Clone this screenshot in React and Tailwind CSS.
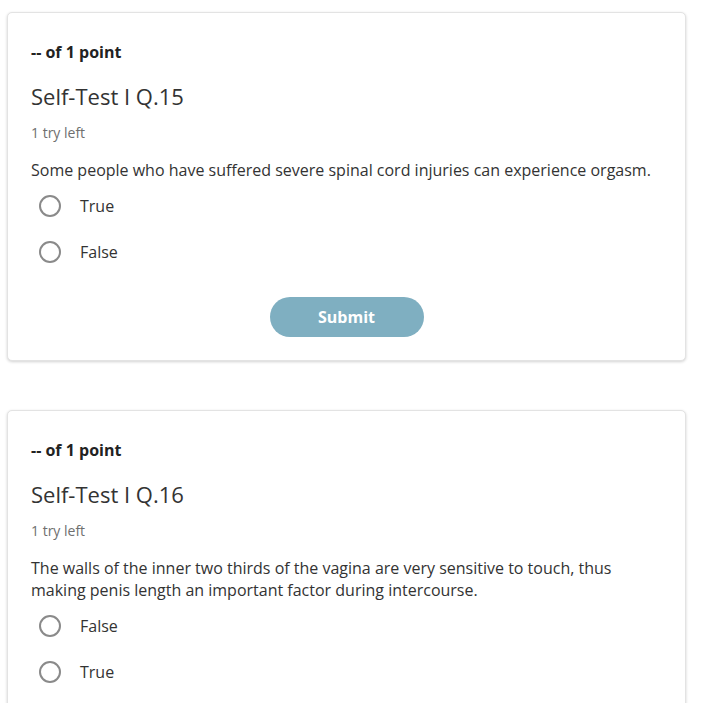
const questions = [
  {
    title: 'Self-Test I Q.15',
    text: 'Some people who have suffered severe spinal cord injuries can experience orgasm.',
    options: ['True', 'False'],
  },
  {
    title: 'Self-Test I Q.16',
    text: 'The walls of the inner two thirds of the vagina are very sensitive to touch, thus making penis length an important factor during intercourse.',
    options: ['False', 'True'],
  },
];

function Radio({ label }) {
  return (
    <label className="flex items-center h-[36px] pl-[8px] cursor-pointer">
      <span className="w-[22px] h-[22px] rounded-full border-2 border-[#8a8a8a] bg-white shrink-0" />
      <span className="ml-[19px] text-[16px] text-[#333]">{label}</span>
    </label>
  );
}

function QuestionCard({ q }) {
  return (
    <div className="bg-white border border-[#e3e3e3] rounded-[5px] shadow-[0_1px_3px_rgba(0,0,0,0.18)] pt-[29px] pb-[23px] px-[23px]">
      <div className="text-[16px] font-bold text-[#222] leading-[20px]">-- of 1 point</div>
      <h2 className="mt-[19px] text-[22px] text-[#333] leading-[30px]">{q.title}</h2>
      <div className="mt-[13px] text-[14px] text-[#6f6f6f] leading-[18px]">1 try left</div>
      <p className="mt-[17px] text-[16px] text-[#333] leading-[22px]">{q.text}</p>
      <div className="mt-[7px] flex flex-col gap-[10px]">
        {q.options.map((o) => (
          <Radio key={o} label={o} />
        ))}
      </div>
      {q.title.endsWith('15') && (
        <div className="flex justify-center mt-[27px]">
          <button className="w-[154px] h-[40px] rounded-full bg-[#7fafc1] text-white font-bold text-[16px]">
            Submit
          </button>
        </div>
      )}
    </div>
  );
}

export default function App() {
  return (
    <div className="bg-white min-h-[703px] pt-[12px] pl-[7px] pr-[34px] font-['Open_Sans',sans-serif]">
      <div className="flex flex-col gap-[49px]">
        {questions.map((q) => (
          <QuestionCard key={q.title} q={q} />
        ))}
      </div>
    </div>
  );
}
